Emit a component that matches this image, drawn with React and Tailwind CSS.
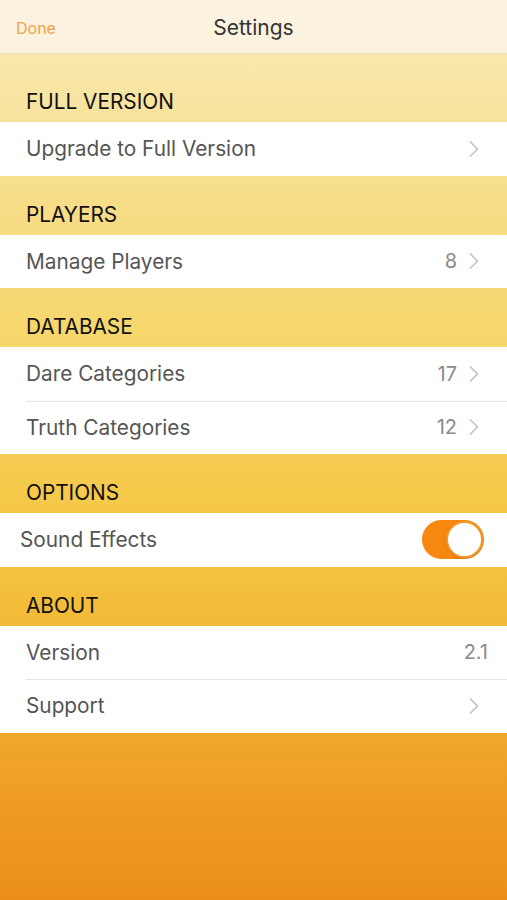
import { ChevronRight } from "lucide-react";

const font = { fontFamily: "Inter, 'Noto Sans', sans-serif" };

function Header({ title, first }) {
  return (
    <div className={`flex items-end px-[26px] pb-[8px] ${first ? "h-[68px]" : "h-[59px]"}`}>
      <span className="text-[20.8px] leading-6 text-[#111]">{title}</span>
    </div>
  );
}

function Row({ label, value, chevron = true, divider }) {
  return (
    <div className="relative flex h-[53.5px] items-center bg-white pl-[26px] pr-[19px]">
      {divider && <div className="absolute top-0 right-0 left-[26px] h-px bg-[#e6e6e6]" />}
      <span className="flex-1 text-[20.8px] text-[#555]">{label}</span>
      {value && <span className="text-[20px] text-[#8a8a8a]">{value}</span>}
      {chevron && <ChevronRight className="ml-[3px] size-[28px] text-[#c4c4c8]" strokeWidth={1.5} />}
    </div>
  );
}

function Toggle() {
  return (
    <div className="relative h-[39px] w-[62px] rounded-full bg-[#f7870f]">
      <div className="absolute top-[1px] right-[1px] size-[37px] rounded-full border-2 border-[#f39a2e] bg-white shadow" />
    </div>
  );
}

export default function App() {
  return (
    <div
      style={font}
      className="min-h-[900px] w-full bg-[linear-gradient(to_bottom,#f8e7ab_60px,#f7dd88_200px,#f6d76c_330px,#f5ca4b_490px,#f3bd3a_600px,#f0a628_740px,#eb8e19_900px)]"
    >
      <header className="relative flex h-[54px] items-center justify-center border-b border-[#eadfbf] bg-[#fbf3e0] pt-[3px]">
        <span className="absolute left-[16px] text-[16px] text-[#f0a246]">Done</span>
        <span className="text-[21px] text-[#333]">Settings</span>
      </header>

      <Header title="FULL VERSION" first />
      <Row label="Upgrade to Full Version" />

      <Header title="PLAYERS" />
      <Row label="Manage Players" value="8" />

      <Header title="DATABASE" />
      <Row label="Dare Categories" value="17" />
      <Row label="Truth Categories" value="12" divider />

      <Header title="OPTIONS" />
      <div className="flex h-[53.5px] items-center bg-white pl-[20px] pr-[23px]">
        <span className="flex-1 text-[20.8px] text-[#555]">Sound Effects</span>
        <Toggle />
      </div>

      <Header title="ABOUT" />
      <div className="flex h-[53.5px] items-center bg-white pl-[26px] pr-[19px]">
        <span className="flex-1 text-[20.8px] text-[#555]">Version</span>
        <span className="text-[20px] text-[#8a8a8a]">2.1</span>
      </div>
      <Row label="Support" divider />
    </div>
  );
}
